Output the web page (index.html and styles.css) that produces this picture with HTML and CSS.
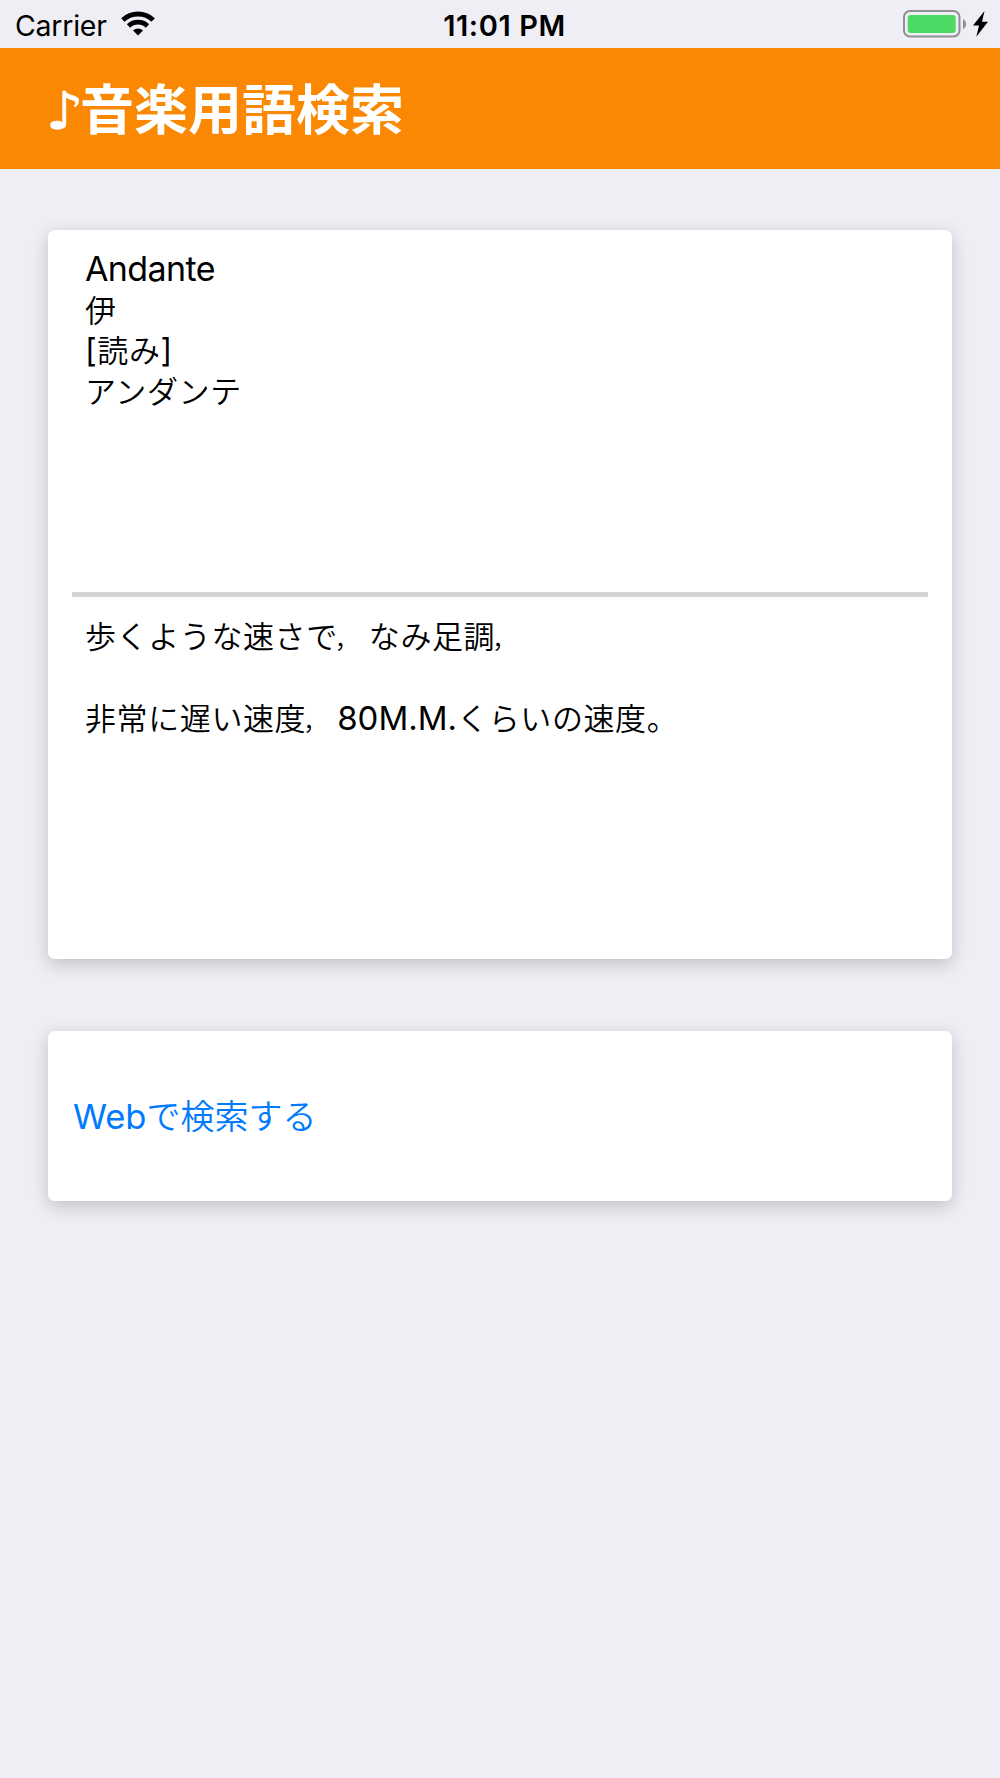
FILE: index.html
```html
<!DOCTYPE html>
<html lang="ja">
<head>
    <meta charset="UTF-8">
    <meta name="viewport" content="width=device-width, initial-scale=1.0">
    <title>音楽用語検索</title>
    <link rel="stylesheet" href="styles.css">
</head>
<body>
    <div class="status-bar">
        <div class="status-left">
            <span class="carrier">Carrier</span>
            <svg class="wifi" width="34" height="25" viewBox="0 0 34 25">
                <g fill="none" stroke="#000" stroke-width="4.8">
                    <path d="M1.8 9.1 A22 22 0 0 1 32.2 9.1"/>
                    <path d="M7.5 15 A13.8 13.8 0 0 1 26.5 15"/>
                </g>
                <path d="M17 24.6 L12 19.6 A7.2 7.2 0 0 1 22 19.6 Z"/>
            </svg>
        </div>
        <div class="clock">11:01 PM</div>
        <div class="status-right">
            <svg width="88" height="28" viewBox="0 0 88 28">
                <rect x="1" y="1" width="55.5" height="25.5" rx="6" fill="none" stroke="#8e8e93" stroke-width="2"/>
                <rect x="4.7" y="5" width="48" height="18" rx="3" fill="#4cd964"/>
                <path d="M60 9 Q63 10.5 63 14 Q63 17.5 60 19 Z" fill="#8e8e93"/>
                <path d="M81.5 1 L70 15.5 H76 L73.3 26.7 L85 11.7 H79 Z"/>
            </svg>
        </div>
    </div>

    <header class="header">
        <h1><span class="note">♪</span>音楽用語検索</h1>
    </header>

    <main class="content">
        <section class="card term-card">
            <div class="term">
                <p class="latin">Andante</p>
                <p>伊</p>
                <p><span class="bracket">[</span>読み<span class="bracket">]</span></p>
                <p>アンダンテ</p>
            </div>
            <hr>
            <div class="meaning">
                <p>歩くような速さで<span class="comma">，</span>なみ足調<span class="comma">，</span></p>
                <p>非常に遅い速度<span class="comma">，</span><span class="tempo">80M.M.</span>くらいの速度。</p>
            </div>
        </section>

        <section class="card web-card">
            <a href="#"><span class="web">Web</span>で検索する</a>
        </section>
    </main>
</body>
</html>
```

FILE: styles.css
```css
* {
    box-sizing: border-box;
}

body {
    margin: 0;
    min-height: 1778px;
    background-color: #efeef4;
    color: #000;
    font-family: "Noto Sans CJK JP", sans-serif;
}

.status-bar {
    display: grid;
    grid-template-columns: 1fr auto 1fr;
    align-items: center;
    height: 48px;
    padding: 0 9px 0 15px;
    font-family: Inter, sans-serif;
}

.status-left {
    display: flex;
    align-items: center;
    gap: 14px;
}

.carrier {
    padding-top: 2px;
    font-size: 28.5px;
    letter-spacing: -0.25px;
}

.wifi {
    margin-bottom: 1px;
}

.clock {
    padding: 2px 0 0 3px;
    font-size: 29px;
    font-weight: 600;
    letter-spacing: 0.6px;
}

.status-right {
    display: flex;
    justify-content: flex-end;
}

.header {
    display: flex;
    align-items: center;
    height: 121px;
    padding: 0 48px;
    background-color: #fb8803;
}

.header h1 {
    display: flex;
    height: 80px;
    margin: 0;
    color: #fff;
    font-size: 54px;
    line-height: 76px;
    font-weight: 700;
}

.note {
    display: inline-block;
    width: 32px;
    padding-top: 4px;
    font-family: "DejaVu Sans", sans-serif;
    font-size: 52px;
    font-weight: 400;
    transform: scaleX(1.15);
    -webkit-text-stroke: 0.6px #fff;
}

.content {
    display: flex;
    flex-direction: column;
    gap: 72px;
    padding: 61px 48px;
}

.card {
    background-color: #fff;
    border-radius: 7px;
    box-shadow: 0 5px 18px rgba(0, 0, 0, 0.2);
}

.term-card {
    height: 729px;
    padding: 18px 24px;
    font-size: 31px;
    font-weight: 350;
    line-height: 40.5px;
    letter-spacing: 0.6px;
}

.term-card p {
    margin: 0;
    height: 40.5px;
}

.term {
    height: 344px;
    padding-left: 13px;
}

.term-card hr {
    height: 5px;
    margin: 0;
    border: none;
    background-color: #d3d3d3;
}

.meaning {
    display: flex;
    flex-direction: column;
    gap: 41px;
    padding: 18px 13px;
}

.latin,
.bracket,
.tempo {
    font-family: Inter, sans-serif;
    font-weight: 400;
}

.latin {
    padding-top: 1px;
    font-size: 34px;
    letter-spacing: -0.6px;
}

.bracket {
    font-size: 32px;
    line-height: 1;
}

.tempo {
    font-size: 33px;
    line-height: 1;
    letter-spacing: 0;
}

.comma {
    margin-left: -3px;
    font-size: 24px;
    letter-spacing: 10px;
}

.web-card {
    display: flex;
    align-items: center;
    height: 170px;
    padding: 0 25px 4px;
}

.web-card a {
    color: #007aff;
    font-size: 34px;
    font-weight: 350;
    text-decoration: none;
}

.web {
    font-family: Inter, sans-serif;
    font-size: 34.5px;
    font-weight: 400;
}
```
